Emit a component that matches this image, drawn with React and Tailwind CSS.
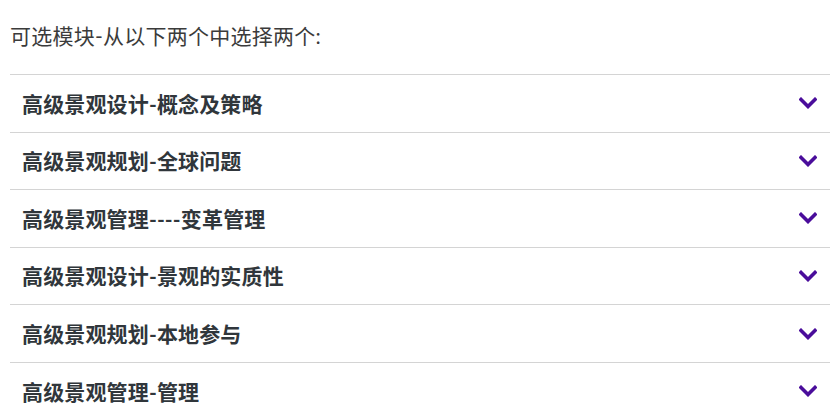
import React from "react";

const items = [
  "高级景观设计-概念及策略",
  "高级景观规划-全球问题",
  "高级景观管理----变革管理",
  "高级景观设计-景观的实质性",
  "高级景观规划-本地参与",
  "高级景观管理-管理",
];

function Chevron() {
  return (
    <svg width="18" height="12" viewBox="0 0 18 12" className="shrink-0">
      <path d="M2 2.5 L9 9.5 L16 2.5" fill="none" stroke="#4a0d9b" strokeWidth="3.6" strokeLinecap="square" strokeLinejoin="miter" />
    </svg>
  );
}

export default function App() {
  return (
    <div className="w-[840px] h-[420px] overflow-hidden bg-white px-[10px] pt-[21px]" style={{ fontFamily: '"Lato", "Noto Sans CJK SC", sans-serif' }}>
      <p className="text-[21px] leading-[30px] text-[#3b3b3b] mb-[23px] tracking-[0.25px]">可选模块-从以下两个中选择两个:</p>
      <div className="w-[820px]">
        {items.map((t) => (
          <div key={t} className="h-[57.6px] border-t border-[#d4d4d4] flex items-center justify-between pl-[12px] pr-[13px]">
            <span className="text-[21px] font-bold text-[#30363b] tracking-[0.15px]">{t}</span>
            <Chevron />
          </div>
        ))}
      </div>
    </div>
  );
}
